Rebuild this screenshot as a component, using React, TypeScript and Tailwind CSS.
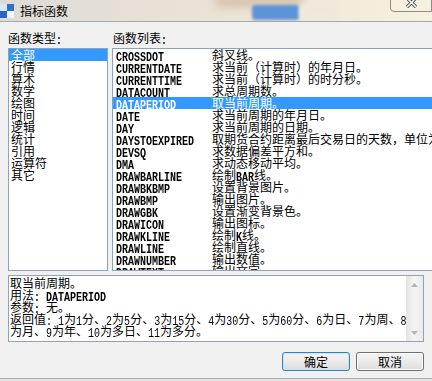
import React from 'react'

const CN = "font-['Noto_Sans_CJK_SC','Noto_Sans_CJK_JP',sans-serif]"

// half-width runs get a narrow mono face so they take 6px a char, like SimSun
function T({ s, thin }: { s: string; thin?: boolean }) {
  const parts = s.split(/([\x20-\x7e]+)/)
  return (
    <>
      {parts.map((p, i) =>
        i % 2 === 1 ? (
          <span
            key={i}
            className={`inline-block whitespace-pre font-['Liberation_Mono',monospace] text-[10px] leading-[12px] scale-y-125 ${thin ? 'font-normal' : 'font-bold'}`}
          >
            {p}
          </span>
        ) : (
          <React.Fragment key={i}>{p}</React.Fragment>
        )
      )}
    </>
  )
}

const types = ['全部', '行情', '算术', '数学', '绘图', '时间', '逻辑', '统计', '引用', '运算符', '其它']

const funcs: [string, string][] = [
  ['CROSSDOT', '斜叉线。'],
  ['CURRENTDATE', '求当前（计算时）的年月日。'],
  ['CURRENTTIME', '求当前（计算时）的时分秒。'],
  ['DATACOUNT', '求总周期数。'],
  ['DATAPERIOD', '取当前周期。'],
  ['DATE', '求当前周期的年月日。'],
  ['DAY', '求当前周期的日期。'],
  ['DAYSTOEXPIRED', '取期货合约距离最后交易日的天数，单位为天。'],
  ['DEVSQ', '求数据偏差平方和。'],
  ['DMA', '求动态移动平均。'],
  ['DRAWBARLINE', '绘制BAR线。'],
  ['DRAWBKBMP', '设置背景图片。'],
  ['DRAWBMP', '输出图片。'],
  ['DRAWGBK', '设置渐变背景色。'],
  ['DRAWICON', '输出图标。'],
  ['DRAWKLINE', '绘制K线。'],
  ['DRAWLINE', '绘制直线。'],
  ['DRAWNUMBER', '输出数值。'],
  ['DRAWTEXT', '输出文字。'],
]

function Arrow({ up, color }: { up?: boolean; color: string }) {
  return (
    <div className="flex h-[17px] w-full items-center justify-center">
      <svg width="7" height="4" viewBox="0 0 7 4">
        {up ? <path d="M0 4 L3.5 0 L7 4 Z" fill={color} /> : <path d="M0 0 L7 0 L3.5 4 Z" fill={color} />}
      </svg>
    </div>
  )
}

function ScrollBar({ thumb, arrow }: { thumb?: boolean; arrow: string }) {
  return (
    <div className="flex w-[17px] shrink-0 flex-col bg-linear-to-r from-[#e4e4e4] via-[#f4f4f4] to-[#eaeaea]">
      <Arrow up color={arrow} />
      {thumb && (
        <>
          <div className="h-[46px]" />
          <div className="mx-auto flex h-[31px] w-[15px] flex-col items-center justify-center gap-[2px] rounded-[2px] border border-[#9a9a9a] bg-linear-to-r from-[#f4f4f4] to-[#dcdcdc]">
            <div className="h-px w-[7px] bg-[#8a8a8a]" />
            <div className="h-px w-[7px] bg-[#8a8a8a]" />
            <div className="h-px w-[7px] bg-[#8a8a8a]" />
            <div className="h-px w-[7px] bg-[#8a8a8a]" />
          </div>
        </>
      )}
      <div className="flex-1" />
      <Arrow color={arrow} />
    </div>
  )
}

export default function App() {
  return (
    <div className={`relative flex h-[381px] w-[432px] flex-col overflow-hidden bg-[#f0f0f0] text-[12px] leading-[12px] text-black ${CN}`}>
      {/* title bar, aero glass */}
      <div className="relative h-[22px] shrink-0 overflow-hidden border-b border-[#a8a8a8] bg-linear-to-r from-[#dedbd6] via-[#ebe3d6] to-[#f7f1e1]">
        <div className="absolute left-[214px] top-[-6px] h-[14px] w-[90px] rounded-full bg-[#c8b195] opacity-60 blur-[4px]" />
        <div className="absolute left-[252px] top-[5px] h-[15px] w-[47px] rounded-[3px] bg-[#5b95d8] blur-[1.5px]" />
        <div className="absolute left-[300px] top-[4px] h-[14px] w-[40px] rounded-[3px] bg-[#efe9dc] blur-[2px]" />
        <div className="absolute right-0 top-[-1px] flex h-[13px] w-[42px] items-start justify-center rounded-bl-[4px] border border-[#8c8c8c] bg-[#f6f0df]">
          <svg width="11" height="8" viewBox="0 0 11 8">
            <path d="M1 -2 L10 7 M10 -2 L1 7" stroke="#3a3a3a" strokeWidth="3.2" />
            <path d="M1 -2 L10 7 M10 -2 L1 7" stroke="#ffffff" strokeWidth="1.6" />
          </svg>
        </div>
        <div className="relative flex h-full items-center gap-[6px]">
          <svg width="14" height="14" viewBox="0 0 14 14">
            <rect x="0" y="0" width="7" height="7" fill="#d8e6f6" />
            <rect x="7" y="0" width="7" height="7" fill="#2f6fcf" />
            <rect x="0" y="7" width="7" height="7" fill="#2a66c4" />
            <rect x="7" y="7" width="7" height="7" fill="#f4f7fb" />
          </svg>
          <span className="text-[12px] leading-[14px]">指标函数</span>
        </div>
      </div>

      {/* body */}
      <div className="flex flex-1 flex-col px-2 pt-[10px]">
        <div className="flex gap-1">
          <div className="w-[100px] shrink-0">
            <div className="h-[12px]"><T s="函数类型:" /></div>
            <div className="mt-1 h-[223px] overflow-hidden border border-[#8ea2bd] bg-white">
              {types.map((t, i) => (
                <div key={t} className={`h-[12px] whitespace-nowrap pl-[2px] ${i === 0 ? 'bg-[#3399ff] text-white' : ''}`}>
                  {t}
                </div>
              ))}
            </div>
          </div>
          <div className="flex-1">
            <div className="h-[12px] pl-px"><T s="函数列表:" /></div>
            <div className="mt-1 flex h-[223px] overflow-hidden border border-[#8ea2bd] bg-white">
              <div className="flex-1 overflow-hidden">
                {funcs.map(([n, d]) => (
                  <div key={n} className={`flex h-[12px] whitespace-nowrap ${n === 'DATAPERIOD' ? 'bg-[#3399ff] text-white' : ''}`}>
                    <div className="w-[99px] shrink-0 pl-[3px]"><T s={n} /></div>
                    <div><T s={d} /></div>
                  </div>
                ))}
              </div>
              <ScrollBar thumb arrow="#5f6670" />
            </div>
          </div>
        </div>

        <div className="mt-1 flex h-[67px] border border-[#8ea2bd] bg-white">
          <div className="flex-1 overflow-hidden whitespace-nowrap pl-px pt-px">
            <div className="h-[12px]">取当前周期。</div>
            <div className="h-[12px]"><T s="用法: DATAPERIOD" /></div>
            <div className="h-[12px]"><T s="参数: 无。" /></div>
            <div className="h-[12px]"><T thin s="返回值: 1为1分、2为5分、3为15分、4为30分、5为60分、6为日、7为周、8" /></div>
            <div className="h-[12px]"><T thin s="为月、9为年、10为多日、11为多分。" /></div>
          </div>
          <ScrollBar arrow="#b4b4b4" />
        </div>

        <div className="mt-[10px] flex justify-end gap-[6px]">
          <button className="h-[19px] w-[68px] rounded-[3px] border border-[#3c7fb1] bg-linear-to-b from-[#f4f4f4] via-[#ebebeb] to-[#dcdcdc] text-[12px] leading-[12px] shadow-[inset_0_0_0_1px_#c6e6f8]">
            确定
          </button>
          <button className="h-[19px] w-[68px] rounded-[3px] border border-[#707070] bg-linear-to-b from-[#f4f4f4] via-[#ebebeb] to-[#dcdcdc] text-[12px] leading-[12px] shadow-[inset_0_0_0_1px_#fcfcfc]">
            取消
          </button>
        </div>
        <div className="flex-1" />
      </div>
      <div className="h-[3px] shrink-0 border-t border-[#a9a9a9] bg-[#e4e4e4]" />
    </div>
  )
}
